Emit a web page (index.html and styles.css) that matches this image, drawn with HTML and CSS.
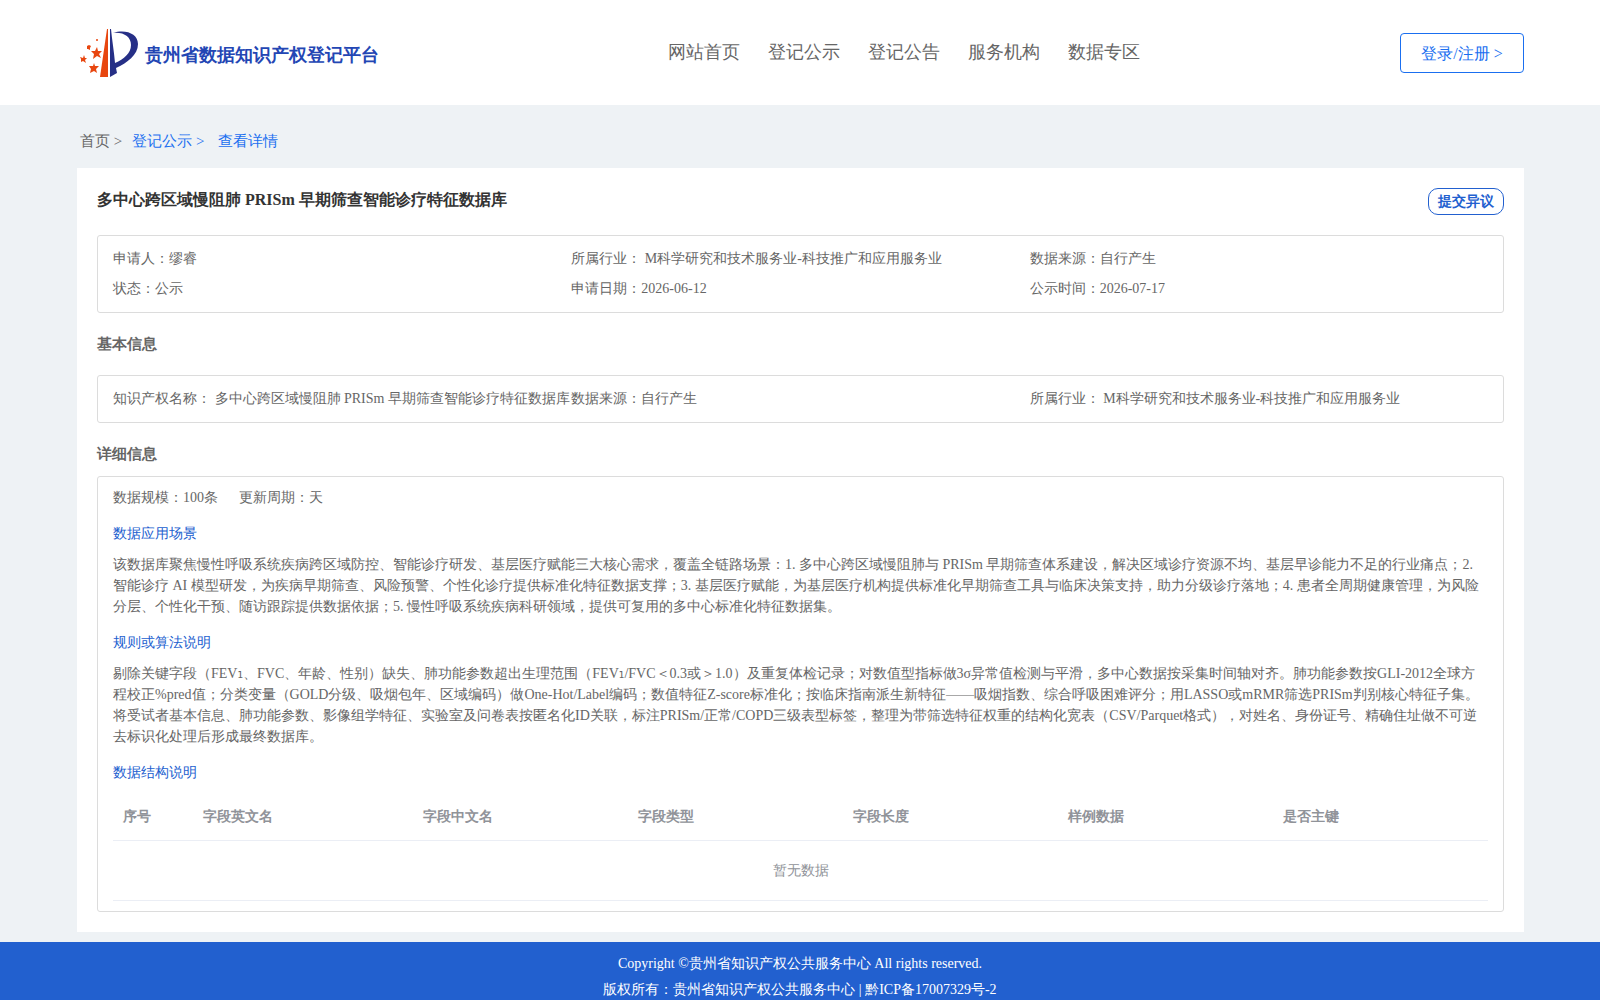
FILE: index.html
```html
<!DOCTYPE html>
<html lang="en">
<head>
    <meta charset="UTF-8">
    <meta name="viewport" content="width=device-width, initial-scale=1.0">
    <title>贵州省数据知识产权登记平台</title>
    <link rel="stylesheet" href="styles.css">
</head>
<body>

    <header class="header">
        <a class="logo" href="#">
            <svg class="logo-icon" width="60" height="52" viewBox="0 0 60 52">
                <path fill="#e8460f" d="M28 2 L29 2 L29 50 L21 50 Z"/>
                <path fill="#262f86" d="M31 2 L32 2 C33 13 35 24 36 36 C45 32 52 26 52 18 C52 10 45 5 34 6 C47 2 59 7 59 17 C59 28 48 36 37 41 L38 46 L31 50 Z"/>
                <g fill="#e8460f">
                    <path d="M18 20 L19 24 L23 24 L20 27 L22 31 L18 29 L14 32 L15 27 L12 24 L16 24 Z"/>
                    <path d="M15 36 L16 39 L20 39 L17 42 L18 46 L15 44 L11 46 L12 42 L10 39 L14 39 Z"/>
                    <path d="M5 28 L6 31 L8 31 L6 33 L7 36 L4 34 L2 35 L2 32 L1 30 L4 31 Z"/>
                    <path d="M8 19 L10 18 L12 19 L11 21 L11 23 L9 22 L8 22 Z"/>
                    <circle cx="18" cy="13" r="1"/>
                </g>
            </svg>
            <span>贵州省数据知识产权登记平台</span>
        </a>
        <nav class="nav">
            <a href="#">网站首页</a>
            <a href="#">登记公示</a>
            <a href="#">登记公告</a>
            <a href="#">服务机构</a>
            <a href="#">数据专区</a>
        </nav>
        <button class="login" type="button">登录/注册 &gt;</button>
    </header>

    <main class="container">
        <div class="breadcrumb">
            <a href="#">首页 &gt;</a>
            <a class="active" href="#">登记公示 &gt;</a>
            <a class="active last" href="#">查看详情</a>
        </div>

        <section class="card">
            <div class="card-top">
                <h1>多中心跨区域慢阻肺 PRISm 早期筛查智能诊疗特征数据库</h1>
                <button class="objection" type="button">提交异议</button>
            </div>

            <div class="box info">
                <div>申请人：缪睿</div>
                <div>所属行业： M科学研究和技术服务业-科技推广和应用服务业</div>
                <div>数据来源：自行产生</div>
                <div>状态：公示</div>
                <div>申请日期：2026-06-12</div>
                <div>公示时间：2026-07-17</div>
            </div>

            <h2 class="basic-title">基本信息</h2>
            <div class="box info">
                <div>知识产权名称： 多中心跨区域慢阻肺 PRISm 早期筛查智能诊疗特征数据库</div>
                <div>数据来源：自行产生</div>
                <div>所属行业： M科学研究和技术服务业-科技推广和应用服务业</div>
            </div>

            <h2>详细信息</h2>
            <div class="box detail">
                <div class="scale">
                    <span>数据规模：100条</span>
                    <span>更新周期：天</span>
                </div>
                <h3>数据应用场景</h3>
                <p>该数据库聚焦慢性呼吸系统疾病跨区域防控、智能诊疗研发、基层医疗赋能三大核心需求，覆盖全链路场景：1. 多中心跨区域慢阻肺与 PRISm 早期筛查体系建设，解决区域诊疗资源不均、基层早诊能力不足的行业痛点；2. 智能诊疗 AI 模型研发，为疾病早期筛查、风险预警、个性化诊疗提供标准化特征数据支撑；3. 基层医疗赋能，为基层医疗机构提供标准化早期筛查工具与临床决策支持，助力分级诊疗落地；4. 患者全周期健康管理，为风险分层、个性化干预、随访跟踪提供数据依据；5. 慢性呼吸系统疾病科研领域，提供可复用的多中心标准化特征数据集。</p>
                <h3>规则或算法说明</h3>
                <p>剔除关键字段（FEV<span class="sub">₁</span>、FVC、年龄、性别）缺失、肺功能参数超出生理范围（FEV<span class="sub">₁</span>/FVC＜0.3或＞1.0）及重复体检记录；对数值型指标做3σ异常值检测与平滑，多中心数据按采集时间轴对齐。肺功能参数按GLI-2012全球方程校正%pred值；分类变量（GOLD分级、吸烟包年、区域编码）做One-Hot/Label编码；数值特征Z-score标准化；按临床指南派生新特征——吸烟指数、综合呼吸困难评分；用LASSO或mRMR筛选PRISm判别核心特征子集。将受试者基本信息、肺功能参数、影像组学特征、实验室及问卷表按匿名化ID关联，标注PRISm/正常/COPD三级表型标签，整理为带筛选特征权重的结构化宽表（CSV/Parquet格式），对姓名、身份证号、精确住址做不可逆去标识化处理后形成最终数据库。</p>
                <h3>数据结构说明</h3>
                <table>
                    <thead>
                        <tr>
                            <th class="col-no">序号</th>
                            <th class="col-en">字段英文名</th>
                            <th>字段中文名</th>
                            <th>字段类型</th>
                            <th>字段长度</th>
                            <th>样例数据</th>
                            <th>是否主键</th>
                        </tr>
                    </thead>
                    <tbody>
                        <tr>
                            <td colspan="7">暂无数据</td>
                        </tr>
                    </tbody>
                </table>
            </div>
        </section>
    </main>

    <footer class="footer">
        <div>Copyright ©贵州省知识产权公共服务中心 All rights reserved.</div>
        <div>版权所有：贵州省知识产权公共服务中心 | 黔ICP备17007329号-2</div>
    </footer>

</body>
</html>
```
FILE: styles.css
```css
* {
    box-sizing: border-box;
}

body {
    font-family: "Liberation Serif", serif;
    margin: 0;
    background-color: #eef2f5;
    color: #666;
    font-size: 14px;
}

a {
    color: inherit;
    text-decoration: none;
}

button {
    font-family: inherit;
    background-color: #fff;
    cursor: pointer;
}

.header {
    display: flex;
    align-items: center;
    justify-content: space-between;
    height: 105px;
    padding: 0 76px 0 77px;
    background-color: #fff;
}

.logo {
    display: flex;
    align-items: center;
    gap: 6px;
    width: 331px;
    padding-left: 2px;
    color: #2346b4;
    font-size: 18px;
    font-weight: bold;
}

.logo span {
    padding-top: 4px;
}

.nav {
    display: flex;
    gap: 28px;
    padding-bottom: 2px;
    font-size: 18px;
}

.login {
    width: 124px;
    height: 40px;
    padding: 3px 0 0;
    border: 1px solid #1a6ff0;
    border-radius: 4px;
    color: #1a6ff0;
    font-size: 16px;
}

.container {
    padding: 0 76px 10px 77px;
}

.breadcrumb {
    display: flex;
    gap: 10px;
    padding: 26px 3px 17px;
    font-size: 15px;
    line-height: 20px;
}

.breadcrumb .active {
    color: #1a6ff0;
}

.breadcrumb .last {
    margin-left: 4px;
}

.card {
    padding: 20px;
    background-color: #fff;
}

.card-top {
    display: flex;
    justify-content: space-between;
    margin-bottom: 20px;
}

h1 {
    margin: 0;
    color: #333;
    font-size: 16px;
    line-height: 24px;
}

h2 {
    margin: 20px 0 11px;
    font-size: 15px;
    line-height: 22px;
}

h2.basic-title {
    margin-bottom: 20px;
}

h3 {
    margin: 15px 0 10px;
    color: #2260cf;
    font-size: 14px;
    font-weight: normal;
    line-height: 21px;
}

p {
    margin: 0;
    line-height: 21px;
}

.sub {
    font-family: "DejaVu Sans", sans-serif;
}

.objection {
    width: 76px;
    height: 27px;
    padding: 0;
    border: 1px solid #2260cf;
    border-radius: 10px;
    color: #2260cf;
    font-size: 14px;
    font-weight: bold;
}

.box {
    border: 1px solid #dcdcdc;
    border-radius: 3px;
}

.info {
    display: grid;
    grid-template-columns: repeat(3, 1fr);
    padding: 8px 15px;
    line-height: 30px;
    white-space: nowrap;
}

.detail {
    padding: 10px 15px;
}

.scale {
    display: flex;
    gap: 21px;
    line-height: 21px;
}

table {
    width: 100%;
    table-layout: fixed;
    border-collapse: separate;
    border-spacing: 0;
    color: #909399;
}

th,
td {
    padding: 0 10px;
    border-bottom: 1px solid #ebeef5;
}

th {
    height: 48px;
    text-align: left;
}

td {
    height: 60px;
    text-align: center;
}

.col-no {
    width: 80px;
}

.col-en {
    width: 220px;
}

.footer {
    padding: 9px 0;
    background-color: #2260cf;
    color: #fff;
    line-height: 26px;
    text-align: center;
}
```
